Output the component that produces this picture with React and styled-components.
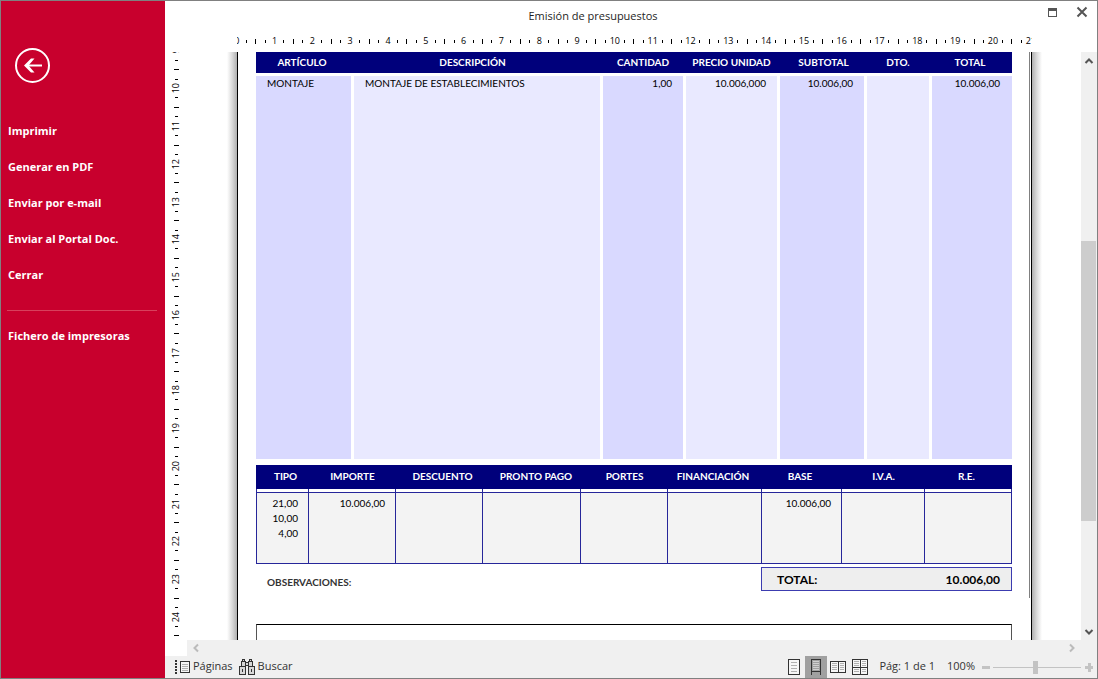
import React, { useState } from "react";
import styled, { createGlobalStyle, css } from "styled-components";

const GlobalStyle = createGlobalStyle`
  * {
    box-sizing: border-box;
  }

  body {
    margin: 0;
    font-family: "Open Sans", "Noto Sans", sans-serif;
    font-size: 11px;
    color: #1e1e1e;
  }

  button {
    padding: 0;
    border: 0;
    background: none;
    font: inherit;
    color: inherit;
    cursor: pointer;
  }
`;

const Window = styled.div`
  display: flex;
  height: 100vh;
  border: 1px solid #808080;
  background: #fff;
  overflow: hidden;
`;

const Sidebar = styled.nav`
  flex: 0 0 164px;
  display: flex;
  flex-direction: column;
  align-items: flex-start;
  padding: 47px 7px 0;
  background: #c8002d;
  color: #fff;
`;

const BackButton = styled.button`
  width: 35px;
  height: 35px;
  margin: 0 0 29px 7px;

  svg {
    display: block;
  }
`;

const MenuItem = styled.button`
  height: 36px;
  font-size: 11px;
  font-weight: 700;
  text-align: left;
  white-space: nowrap;
`;

const Divider = styled.hr`
  width: 100%;
  height: 1px;
  margin: 18px 0 6px -1px;
  border: 0;
  background: #d8405c;
`;

const Main = styled.main`
  flex: 1;
  min-width: 0;
  display: flex;
  flex-direction: column;
`;

const TitleBar = styled.header`
  display: grid;
  grid-template-columns: 1fr auto 1fr;
  height: 30px;
  padding: 0 8px 0 0;
`;

const Title = styled.h1`
  grid-column: 2;
  margin: 0;
  padding-right: 68px;
  font-size: 11px;
  font-weight: 400;
  line-height: 30px;
`;

const WindowButtons = styled.div`
  display: flex;
  justify-content: flex-end;
  gap: 15px;
  padding-top: 4px;

  button {
    width: 14px;
    height: 14px;
  }

  svg {
    display: block;
  }
`;

const RulerRow = styled.div`
  display: flex;
  justify-content: center;
  height: 21px;
  padding: 0 16px 0 23px;
`;

const HorizontalRuler = styled.div`
  width: 795px;
  overflow: hidden;
`;

const VerticalRuler = styled.div`
  flex: 0 0 22px;
  overflow: hidden;
`;

const Marks = styled.div`
  display: flex;
  color: #000;
  font-size: 9px;
  line-height: 10px;

  ${({ $vertical }) =>
    $vertical
      ? css`
          flex-direction: column;
          width: 22px;
          height: 595px;
          margin-top: -6px;
        `
      : css`
          height: 20px;
          margin: 0 -3px 0 -5px;
        `}
`;

const Mark = styled.span`
  flex: 1 1 0;
  min-width: 0;
  min-height: 0;
  display: flex;
  align-items: center;
  justify-content: center;
`;

const Tick = styled.i`
  width: ${({ $vertical, $long }) => ($vertical ? ($long ? 5 : 3) : 1)}px;
  height: ${({ $vertical, $long }) => ($vertical ? 1 : $long ? 5 : 3)}px;
  background: #000;
`;

const MarkLabel = styled.span`
  flex: none;
  ${({ $vertical }) =>
    $vertical &&
    css`
      writing-mode: vertical-rl;
      transform: rotate(180deg);
    `}
`;

const Viewer = styled.div`
  flex: 1;
  min-height: 0;
  display: flex;
`;

const Canvas = styled.div`
  flex: 1;
  display: flex;
  justify-content: center;
  padding-left: 1px;
  overflow: hidden;
`;

const PaperShadow = styled.div`
  flex: 0 0 10px;
  background: linear-gradient(
    to ${({ $side }) => $side},
    #b0b0b0,
    #dcdcdc 50%,
    #fff
  );
`;

const Paper = styled.article`
  flex: 0 0 795px;
  border: solid #000;
  border-width: 0 1px;
  font-family: Lato, "Open Sans", sans-serif;
  font-size: 10px;
  color: #000;
`;

const PaperBody = styled.div`
  height: 546px;
  margin-right: 1px;
  padding: 0 17px 0 18px;
  border-right: 1px solid #808080;
`;

const Table = styled.table`
  width: 100%;
  table-layout: fixed;
  border-collapse: separate;
  border-spacing: 0;
`;

const HeadCell = styled.th`
  height: ${({ $height }) => $height}px;
  padding: 0 ${({ $end = 0 }) => $end}px 2px ${({ $start = 0 }) => $start}px;
  background: #00007b;
  color: #fff;
  font-weight: 700;
  line-height: 12px;
  white-space: nowrap;
`;

const ItemCell = styled.td`
  height: 386px;
  padding: 1px 11px 0;
  border: solid #fff;
  border-width: 3px 3px 0 0;
  background: ${({ $dark }) => ($dark ? "#d9d9ff" : "#e9e9ff")};
  line-height: 12px;
  text-align: ${({ $left }) => ($left ? "left" : "right")};
  vertical-align: top;
  white-space: nowrap;

  &:last-child {
    border-right-width: 0;
    padding-right: 12px;
  }
`;

const TaxTable = styled(Table)`
  margin-top: 6px;
`;

const TaxCell = styled.td`
  height: 75px;
  padding: 7px 10px 0;
  border: solid #26269a;
  border-width: 0 1px 1px 0;
  background: linear-gradient(
    #fff 3px,
    #26269a 3px,
    #26269a 4px,
    #f3f3f3 4px
  );
  line-height: 15px;
  text-align: right;
  vertical-align: top;

  &:first-child {
    border-left-width: 1px;
  }
`;

const Footer = styled.div`
  display: flex;
  justify-content: space-between;
  margin-top: 3px;
`;

const Notes = styled.p`
  margin: 0;
  padding-left: 11px;
  color: #333;
  font-weight: 700;
  line-height: 30px;
`;

const Total = styled.div`
  display: flex;
  justify-content: space-between;
  width: 251px;
  height: 24px;
  padding: 0 11px 0 15px;
  border: 1px solid #3c3cb0;
  background: #eee;
  font-size: 12px;
  font-weight: 700;
  line-height: 23px;
`;

const NotesBox = styled.div`
  height: 200px;
  margin: 26px 19px 0 18px;
  border: 1px solid #555;
  border-top-color: #000;
`;

const ScrollColumn = styled.div`
  flex: 0 0 16px;
  display: flex;
  flex-direction: column;
  background: #f0f0f0;
`;

const ScrollButton = styled.button`
  flex: 0 0 17px;
  height: 16px;
  display: flex;
  align-items: center;
  justify-content: center;
`;

const ScrollTrack = styled.div`
  flex: 1;
  display: flex;
  flex-direction: column;
`;

const ScrollThumb = styled.div`
  flex: 281;
  margin-right: 1px;
  background: #cdcdcd;
`;

const ScrollGap = styled.div`
  flex: ${({ $size }) => $size};
`;

const ScrollRow = styled.div`
  display: flex;
  justify-content: space-between;
  height: 16px;
  margin-left: 22px;
  padding-right: 17px;
  background: #f0f0f0;
`;

const StatusBar = styled.footer`
  display: flex;
  align-items: center;
  height: 22px;
  padding: 0 3px 0 10px;
  background: #f0f0f0;
  color: #333;
`;

const StatusButton = styled.button`
  display: flex;
  align-items: center;
  gap: 3px;
  margin-right: 6px;
  line-height: 16px;

  span {
    padding-bottom: 2px;
  }
`;

const ViewButtons = styled.div`
  display: flex;
  margin-left: auto;
  margin-right: 8px;
`;

const ViewButton = styled.button`
  width: 22px;
  height: 22px;
  display: flex;
  align-items: center;
  justify-content: center;
  background: ${({ $active }) => ($active ? "#a0a0a0" : "transparent")};
`;

const StatusText = styled.span`
  margin-right: ${({ $gap }) => $gap}px;
  padding-bottom: 2px;
  line-height: 16px;
  white-space: nowrap;
`;

const ZoomButton = styled.button`
  width: 10px;
  height: 10px;

  svg {
    display: block;
  }
`;

const ZoomSlider = styled.input`
  appearance: none;
  width: 88px;
  height: 13px;
  margin: 0 3px 0 2px;
  background: linear-gradient(#c3c3c3, #c3c3c3) center / 100% 1px no-repeat;

  &::-webkit-slider-thumb {
    appearance: none;
    width: 5px;
    height: 13px;
    background: #c3c3c3;
  }
`;

const menu = [
  "Imprimir",
  "Generar en PDF",
  "Enviar por e-mail",
  "Enviar al Portal Doc.",
  "Cerrar",
];

const itemColumns = [
  { label: "ARTÍCULO", value: "MONTAJE", width: 98, end: 6, left: true },
  {
    label: "DESCRIPCIÓN",
    value: "MONTAJE DE ESTABLECIMIENTOS",
    width: 249,
    end: 12,
    left: true,
  },
  { label: "CANTIDAD", value: "1,00", width: 83, end: 3 },
  { label: "PRECIO UNIDAD", value: "10.006,000", width: 94, end: 3 },
  { label: "SUBTOTAL", value: "10.006,00", width: 87 },
  { label: "DTO.", value: "", width: 65, end: 3 },
  { label: "TOTAL", value: "10.006,00", width: 80, end: 4 },
];

const taxColumns = [
  { label: "TIPO", values: ["21,00", "10,00", "4,00"], width: 53, start: 6 },
  { label: "IMPORTE", values: ["10.006,00"], width: 87 },
  { label: "DESCUENTO", values: [], width: 87, start: 6 },
  { label: "PRONTO PAGO", values: [], width: 98, start: 8 },
  { label: "PORTES", values: [], width: 87 },
  { label: "FINANCIACIÓN", values: [], width: 94, end: 4 },
  { label: "BASE", values: ["10.006,00"], width: 80, end: 4 },
  { label: "I.V.A.", values: [], width: 83 },
  { label: "R.E.", values: [], width: 87, end: 4 },
];

// four marks per centimetre: label, short, long, short
function Ruler({ from, count, vertical }) {
  return (
    <Marks $vertical={vertical}>
      {Array.from({ length: count }, (_, i) => (
        <Mark key={i}>
          {i % 4 === 0 ? (
            <MarkLabel $vertical={vertical}>{from + i / 4}</MarkLabel>
          ) : (
            <Tick $vertical={vertical} $long={i % 4 === 2} />
          )}
        </Mark>
      ))}
    </Marks>
  );
}

function Chevron({ d, color }) {
  return (
    <svg width="10" height="10" viewBox="0 0 10 10" fill="none">
      <path d={d} stroke={color} strokeWidth="2" />
    </svg>
  );
}

function PagesIcon() {
  return (
    <svg width="15" height="16" viewBox="0 0 15 16" shapeRendering="crispEdges">
      <path d="M1 1v14" stroke="#333" strokeWidth="2" strokeDasharray="2 1" />
      <path d="M5.5 2.5h9v11h-9z" fill="#f6f6f6" stroke="#333" />
      <path d="M7 5.5h6M7 7.5h6M7 9.5h6M7 11.5h6" stroke="#b0b0b0" />
    </svg>
  );
}

function SearchIcon() {
  return (
    <svg width="16" height="16" viewBox="0 0 16 16" shapeRendering="crispEdges">
      <g fill="#d8d8d8" stroke="#333">
        <path d="M3.5.5h2v2h-2zM10.5.5h2v2h-2z" />
        <path d="M2.5 2.5h4v5h-4zM9.5 2.5h4v5h-4z" />
        <path d="M6.5 3.5h3v3h-3z" />
        <path d="M.5 7.5h6v8h-6zM9.5 7.5h6v8h-6z" />
      </g>
      <path d="M3.5 10v3M12.5 10v3" stroke="#333" />
    </svg>
  );
}

function SinglePageIcon() {
  return (
    <svg width="12" height="16" viewBox="0 0 12 16" shapeRendering="crispEdges">
      <path d="M.5.5h11v15H.5z" fill="#f6f6f6" stroke="#333" />
      <path d="M3 3.5h6M3 6.5h6M3 9.5h6M3 12.5h6" stroke="#b0b0b0" />
    </svg>
  );
}

function ContinuousIcon() {
  return (
    <svg width="10" height="16" viewBox="0 0 10 16" shapeRendering="crispEdges">
      <path d="M.5 16V.5h9V16M.5 12.5h9" fill="none" stroke="#333" />
      <path d="M2 2.5h6M2 4.5h6M2 6.5h6M2 8.5h6M2 10.5h6" stroke="#d0d0d0" />
    </svg>
  );
}

function FacingIcon() {
  return (
    <svg width="16" height="12" viewBox="0 0 16 12" shapeRendering="crispEdges">
      <path d="M.5.5h15v11H.5zM8.5.5v11" fill="#f6f6f6" stroke="#333" />
      <path
        d="M2 2.5h5M2 4.5h5M2 6.5h5M2 8.5h5M10 2.5h4M10 4.5h4M10 6.5h4M10 8.5h4"
        stroke="#b0b0b0"
      />
    </svg>
  );
}

function GridIcon() {
  return (
    <svg width="16" height="16" viewBox="0 0 16 16" shapeRendering="crispEdges">
      <path d="M.5.5h15v15H.5zM8.5.5v15M.5 8.5h15" fill="#f6f6f6" stroke="#333" />
      <path
        d="M2 2.5h5M2 4.5h5M2 6.5h5M10 2.5h4M10 4.5h4M10 6.5h4M2 10.5h5M2 12.5h5M10 10.5h4M10 12.5h4"
        stroke="#b0b0b0"
      />
    </svg>
  );
}

const views = [
  { name: "Una página", Icon: SinglePageIcon },
  { name: "Continuo", Icon: ContinuousIcon },
  { name: "Dos páginas", Icon: FacingIcon },
  { name: "Cuatro páginas", Icon: GridIcon },
];

export default function App() {
  const [view, setView] = useState(1);
  const [zoom, setZoom] = useState(48);

  return (
    <>
      <GlobalStyle />
      <Window>
        <Sidebar>
          <BackButton aria-label="Volver">
            <svg width="35" height="35" viewBox="0 0 35 35" fill="none">
              <circle cx="17.5" cy="17.5" r="16.5" stroke="#fff" strokeWidth="2" />
              <path d="M11 17.5h16" stroke="#fff" strokeWidth="2" />
              <path d="M9 17.5l7-7h3.500l-6 7 6 7H16z" fill="#fff" />
            </svg>
          </BackButton>
          {menu.map((item) => (
            <MenuItem key={item}>{item}</MenuItem>
          ))}
          <Divider />
          <MenuItem>Fichero de impresoras</MenuItem>
        </Sidebar>
        <Main>
          <TitleBar>
            <Title>Emisión de presupuestos</Title>
            <WindowButtons>
              <button aria-label="Maximizar">
                <svg width="14" height="14" viewBox="0 0 14 14" shapeRendering="crispEdges">
                  <path d="M2.5 4.5h8v7h-8z" fill="none" stroke="#555" />
                  <path d="M2 3h9v3H2z" fill="#555" />
                </svg>
              </button>
              <button aria-label="Cerrar ventana">
                <svg width="14" height="14" viewBox="0 0 14 14">
                  <path d="M2.5 2.5l9 9M11.500 2.500l-9 9" stroke="#555" strokeWidth="2" />
                </svg>
              </button>
            </WindowButtons>
          </TitleBar>
          <RulerRow>
            <HorizontalRuler>
              <Ruler from={0} count={85} />
            </HorizontalRuler>
          </RulerRow>
          <Viewer>
            <VerticalRuler>
              <Ruler from={9} count={63} vertical />
            </VerticalRuler>
            <Canvas>
              <PaperShadow $side="left" />
              <Paper>
                <PaperBody>
                  <Table>
                    <colgroup>
                      {itemColumns.map((col) => (
                        <col key={col.label} width={col.width} />
                      ))}
                    </colgroup>
                    <thead>
                      <tr>
                        {itemColumns.map((col) => (
                          <HeadCell key={col.label} $height={21} $end={col.end}>
                            {col.label}
                          </HeadCell>
                        ))}
                      </tr>
                    </thead>
                    <tbody>
                      <tr>
                        {itemColumns.map((col, i) => (
                          <ItemCell key={col.label} $dark={i % 2 === 0} $left={col.left}>
                            {col.value}
                          </ItemCell>
                        ))}
                      </tr>
                    </tbody>
                  </Table>
                  <TaxTable>
                    <colgroup>
                      {taxColumns.map((col) => (
                        <col key={col.label} width={col.width} />
                      ))}
                    </colgroup>
                    <thead>
                      <tr>
                        {taxColumns.map((col) => (
                          <HeadCell
                            key={col.label}
                            $height={24}
                            $start={col.start}
                            $end={col.end}>
                            {col.label}
                          </HeadCell>
                        ))}
                      </tr>
                    </thead>
                    <tbody>
                      <tr>
                        {taxColumns.map((col) => (
                          <TaxCell key={col.label}>
                            {col.values.map((value) => (
                              <div key={value}>{value}</div>
                            ))}
                          </TaxCell>
                        ))}
                      </tr>
                    </tbody>
                  </TaxTable>
                  <Footer>
                    <Notes>OBSERVACIONES:</Notes>
                    <Total>
                      <span>TOTAL:</span>
                      <span>10.006,00</span>
                    </Total>
                  </Footer>
                </PaperBody>
                <NotesBox />
              </Paper>
              <PaperShadow $side="right" />
            </Canvas>
            <ScrollColumn>
              <ScrollButton aria-label="Subir">
                <Chevron d="M1.5 7L5 3.5 8.5 7" color="#555" />
              </ScrollButton>
              <ScrollTrack>
                <ScrollGap $size={172} />
                <ScrollThumb />
                <ScrollGap $size={102} />
              </ScrollTrack>
              <ScrollButton aria-label="Bajar">
                <Chevron d="M1.5 3L5 6.5 8.5 3" color="#555" />
              </ScrollButton>
            </ScrollColumn>
          </Viewer>
          <ScrollRow>
            <ScrollButton aria-label="Izquierda">
              <Chevron d="M7 1.5L3.5 5 7 8.5" color="#bbb" />
            </ScrollButton>
            <ScrollButton aria-label="Derecha">
              <Chevron d="M3 1.5L6.5 5 3 8.5" color="#bbb" />
            </ScrollButton>
          </ScrollRow>
          <StatusBar>
            <StatusButton>
              <PagesIcon />
              <span>Páginas</span>
            </StatusButton>
            <StatusButton>
              <SearchIcon />
              <span>Buscar</span>
            </StatusButton>
            <ViewButtons>
              {views.map(({ name, Icon }, i) => (
                <ViewButton
                  key={name}
                  aria-label={name}
                  $active={view === i}
                  onClick={() => setView(i)}>
                  <Icon />
                </ViewButton>
              ))}
            </ViewButtons>
            <StatusText $gap={12}>Pág: 1 de 1</StatusText>
            <StatusText $gap={6}>100%</StatusText>
            <ZoomButton aria-label="Reducir" onClick={() => setZoom(zoom - 5)}>
              <svg width="10" height="10" viewBox="0 0 10 10">
                <path d="M1 4h8v3H1z" fill="#c3c3c3" />
              </svg>
            </ZoomButton>
            <ZoomSlider
              type="range"
              aria-label="Zoom"
              value={zoom}
              onChange={(e) => setZoom(Number(e.target.value))}
            />
            <ZoomButton aria-label="Ampliar" onClick={() => setZoom(zoom + 5)}>
              <svg width="10" height="10" viewBox="0 0 10 10">
                <path d="M1 4h8v3H1zM4 1h3v9H4z" fill="#c3c3c3" />
              </svg>
            </ZoomButton>
          </StatusBar>
        </Main>
      </Window>
    </>
  );
}
